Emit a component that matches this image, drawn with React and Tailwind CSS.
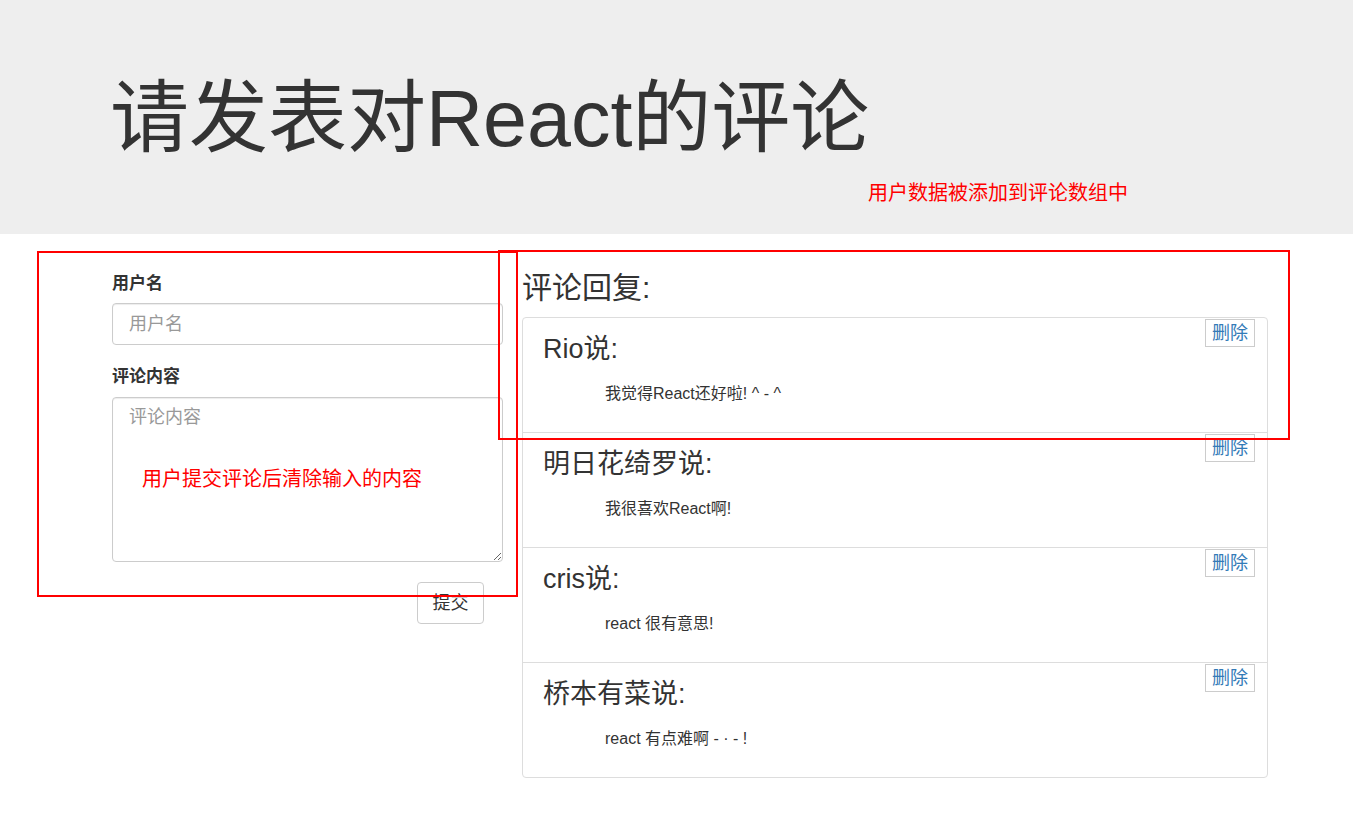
import React from 'react'

const comments = [
  { name: 'Rio', text: '我觉得React还好啦! ^ - ^' },
  { name: '明日花绮罗', text: '我很喜欢React啊!' },
  { name: 'cris', text: 'react 很有意思!' },
  { name: '桥本有菜', text: 'react 有点难啊 - · - !' }
]

function CommentForm() {
  return (
    <div className="w-[391px] pt-[38px]">
      <label className="block text-[17px] font-bold leading-[24px] mb-[7px]">用户名</label>
      <input
        type="text"
        placeholder="用户名"
        className="block w-full h-[42px] px-[16px] text-[18px] border border-[#ccc] rounded-[4px] shadow-[inset_0_1px_1px_rgba(0,0,0,0.075)] placeholder:text-[#999] outline-none"
      />
      <label className="block text-[17px] font-bold leading-[24px] mt-[20px] mb-[8px]">评论内容</label>
      <textarea
        placeholder="评论内容"
        className="block w-full h-[165px] px-[16px] pt-[7px] text-[18px] leading-[24px] border border-[#ccc] rounded-[4px] shadow-[inset_0_1px_1px_rgba(0,0,0,0.075)] placeholder:text-[#999] outline-none"
      />
      <div className="flex justify-end pr-[19px] mt-[20px]">
        <button className="w-[67px] h-[42px] text-[18px] text-[#333] bg-white border border-[#ccc] rounded-[4px]">
          提交
        </button>
      </div>
    </div>
  )
}

function CommentItem({ name, text }) {
  return (
    <div className="relative h-[115px] border-t border-[#ddd] first:border-t-0 first:h-[114px] pl-[20px] pt-[16px]">
      <h3 className="text-[27px] leading-[30px]">{name}说:</h3>
      <p className="text-[16px] leading-[23px] mt-[18px] pl-[62px]">{text}</p>
      <button className="absolute top-[1px] right-[12px] w-[50px] h-[28px] text-[18px] leading-[26px] text-[#337ab7] bg-white border border-[#ccc]">
        删除
      </button>
    </div>
  )
}

function CommentList() {
  return (
    <div className="w-[746px] pt-[37px]">
      <h2 className="text-[30px] leading-[33px] mb-[13px]">评论回复:</h2>
      <div className="border border-[#ddd] rounded-[4px]">
        {comments.map((c) => (
          <CommentItem key={c.name} name={c.name} text={c.text} />
        ))}
      </div>
    </div>
  )
}

export default function App() {
  return (
    <div
      className="relative min-h-[824px] bg-white text-[#333]"
      style={{ fontFamily: '"Liberation Sans", "Noto Sans CJK SC", sans-serif' }}
    >
      {/* Jumbotron */}
      <div className="h-[234px] bg-[#eee] pl-[110px] pt-[76px]">
        <h1 className="text-[79px] leading-[86px]">请发表对React的评论</h1>
      </div>

      <div className="flex gap-[19px] pl-[112px]">
        <CommentForm />
        <CommentList />
      </div>

      {/* annotations */}
      <div className="absolute left-[868px] top-[181px] text-[20px] leading-[24px] text-[#ff0000]">
        用户数据被添加到评论数组中
      </div>
      <div className="absolute left-[142px] top-[467px] text-[20px] leading-[24px] text-[#ff0000]">
        用户提交评论后清除输入的内容
      </div>
      <div className="absolute left-[37px] top-[251px] w-[481px] h-[346px] border-2 border-[#ff0000] pointer-events-none" />
      <div className="absolute left-[498px] top-[250px] w-[792px] h-[190px] border-2 border-[#ff0000] pointer-events-none" />
    </div>
  )
}
